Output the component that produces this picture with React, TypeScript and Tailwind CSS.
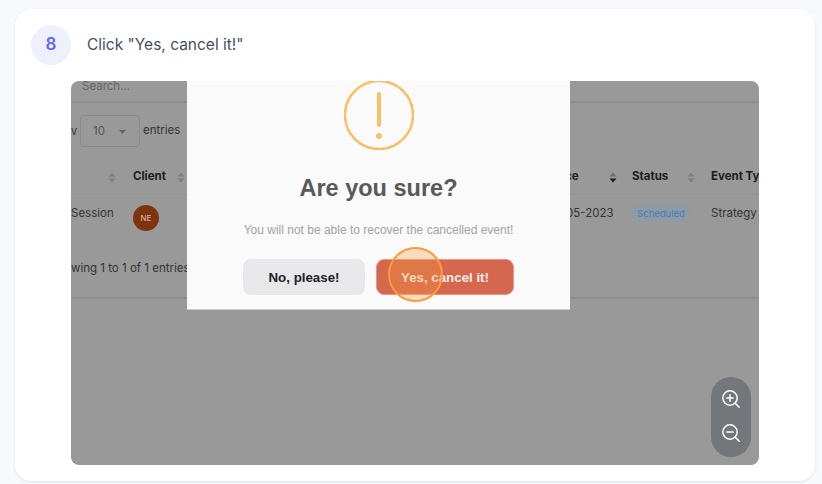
import React from "react";

const poppins = "font-['Inter','Liberation_Sans',sans-serif]";

function Sort({ active = false }: { active?: boolean }) {
  return (
    <svg width="8" height="11" viewBox="0 0 8 11" className="shrink-0">
      <path d="M4 0.5 L7.5 4.5 H0.5 Z" fill={active ? "#6f6f6f" : "#7f7f7f"} />
      <path d="M4 10.5 L7.5 6.5 H0.5 Z" fill={active ? "#1f1f24" : "#7f7f7f"} />
    </svg>
  );
}

function ZoomIcon({ plus }: { plus?: boolean }) {
  return (
    <svg width="20" height="20" viewBox="0 0 20 20" fill="none" stroke="#fff" strokeWidth="1.5" strokeLinecap="round">
      <circle cx="9" cy="9" r="7.2" />
      <path d="M14.4 14.4 L18.2 18.2" />
      <path d="M5.8 9 H12.2" />
      {plus && <path d="M9 5.8 V12.2" />}
    </svg>
  );
}

export default function App() {
  return (
    <div className="h-[484px] w-[822px] overflow-hidden bg-[#f8f9fc] pl-[15px] pt-[9px]">
      <div className="h-[472px] w-[800px] rounded-2xl bg-white pl-4 pt-4 shadow-[0_1px_3px_rgba(60,70,110,0.12)]">
        <div className="flex h-10 items-center gap-4">
          <div className="flex h-10 w-10 items-center justify-center rounded-full bg-[#eef1fd] font-['Inter',sans-serif] text-[17px] font-semibold text-[#6366f1]">
            8
          </div>
          <span className="font-['Inter',sans-serif] text-[15.5px] text-[#454f63]">Click "Yes, cancel it!"</span>
        </div>

        <div className={`relative ml-10 mt-4 h-[384px] w-[688px] overflow-hidden rounded-lg bg-[#999999] ${poppins}`}>
          {/* dimmed page behind the dialog */}
          <div className="h-[22px] border-b-2 border-[#8e8e8e] pl-[11px] text-[11.5px] leading-[11px] text-[#666]">Search...</div>

          <div className="mt-[11px] flex h-[34px] items-center text-[11.5px] text-[#333]">
            <span className="w-[9px] text-[11px] leading-none">v</span>
            <div className="flex h-8 w-[60px] items-center justify-between rounded border border-[#8a8a8a] pl-3 pr-[13px] pt-px text-[#555]">
              <span>10</span>
              <svg width="7" height="4" viewBox="0 0 7 4"><path d="M0 0H7L3.5 4Z" fill="#666" /></svg>
            </div>
            <span className="ml-[3px]">entries</span>
          </div>

          <div className="mt-[9px] flex h-[38px] items-center border-b border-[#939393] pt-[3px] text-[11.5px] font-bold text-[#1c1c22]">
            <div className="flex w-[62px] shrink-0 justify-end pr-[17px]"><Sort /></div>
            <div className="flex w-[58px] shrink-0 items-center justify-between pr-[6px]"><span>Client</span><Sort /></div>
            <div className="w-[379px] shrink-0" />
            <div className="flex w-[62px] shrink-0 items-center justify-between pr-[15px]"><span className="-ml-[5px]">ce</span><Sort active /></div>
            <div className="flex w-[79px] shrink-0 items-center justify-between pr-[16px]"><span>Status</span><Sort /></div>
            <span className="whitespace-nowrap">Event Type</span>
          </div>

          <div className="flex h-[65px] items-start pt-[10px] text-[11.5px] leading-4 text-[#333]">
            <span className="w-[62px] shrink-0">Session</span>
            <div className="flex h-[26px] w-[26px] shrink-0 items-center justify-center rounded-full bg-[#7f3410] text-[8px] text-[#d8c0b4]">NE</div>
            <div className="w-[411px] shrink-0" />
            <span className="w-[62px] shrink-0 whitespace-nowrap pl-px"><span className="-ml-[5px] inline-block">05-2023</span></span>
            <div className="w-[79px] shrink-0">
              <div className="flex h-[17px] w-[58px] items-center justify-center rounded bg-[#8f9aa3] text-[9.5px] text-[#3b82bd]">Scheduled</div>
            </div>
            <span className="whitespace-nowrap">Strategy</span>
          </div>

          <div className="h-[39px] border-b-2 border-[#8e8e8e] text-[11.5px] leading-4 text-[#333]">wing 1 to 1 of 1 entries</div>

          {/* dialog */}
          <div className="absolute left-[116px] top-0 flex h-[228px] w-[383px] flex-col items-center bg-[#fafafa] shadow-[0_1px_0_rgba(255,255,255,0.5)]">
            <svg width="70" height="70" viewBox="0 0 70 70" className="-mt-px shrink-0" fill="none">
              <circle cx="35" cy="35" r="34" stroke="#f8bf67" strokeWidth="2.5" />
              <path d="M35 14 V45" stroke="#f8bf67" strokeWidth="4" strokeLinecap="round" />
              <circle cx="35" cy="56" r="3" fill="#f8bf67" />
            </svg>
            <div className="mt-6 font-['Liberation_Sans',sans-serif] text-[23.5px] font-bold leading-[28px] text-[#595959]">Are you sure?</div>
            <div className="mt-5 font-['Liberation_Sans',sans-serif] text-xs font-light leading-[16px] text-[#a3a3a3]">
              You will not be able to recover the cancelled event!
            </div>
            <div className="mt-[21px] flex gap-[11px] font-['Liberation_Sans',sans-serif] text-[13.3px] font-bold">
              <div className="flex h-9 w-[122px] items-center justify-center rounded-lg bg-[#e8e8ea] pt-px text-[#222228]">No, please!</div>
              <div className="flex h-9 w-[138px] items-center justify-center rounded-lg border border-[#e59a89] bg-[#d5674f] pt-px text-[#fdeee9]">Yes, cancel it!</div>
            </div>
          </div>

          {/* click highlight */}
          <div className="absolute left-[317px] top-[166px] h-[55px] w-[55px] rounded-full border-2 border-[#fb9b3c] bg-[#fb9b3c]/30" />

          {/* zoom control */}
          <div className="absolute left-[640px] top-[296px] flex h-20 w-10 flex-col items-center justify-center gap-[14px] rounded-full bg-[#73777c] pb-[2px]">
            <ZoomIcon plus />
            <ZoomIcon />
          </div>
        </div>
      </div>
    </div>
  );
}
